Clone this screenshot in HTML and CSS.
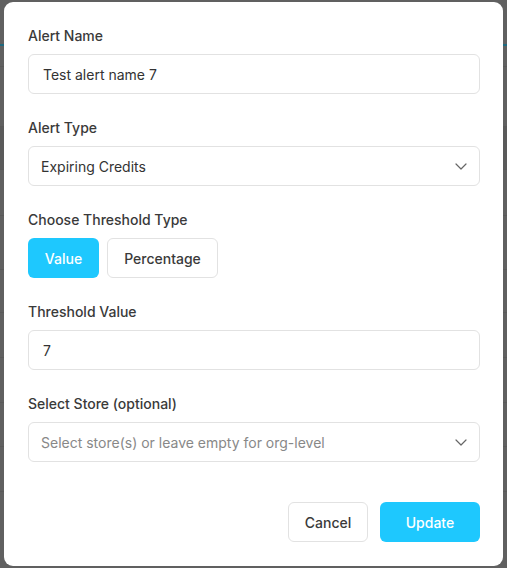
FILE: index.html
```html
<!DOCTYPE html>
<html lang="en">
<head>
<meta charset="utf-8">
<title>Edit Alert</title>
<link rel="stylesheet" href="styles.css">
</head>
<body>
<div class="backdrop">
  <div class="bg-rows">
    <div class="bg-row accent" style="height:46px"></div>
    <div class="bg-row" style="height:21px"></div>
    <div class="bg-row" style="height:60px"></div>
    <div class="bg-row shade" style="height:43px"></div>
    <div class="bg-row" style="height:46px"></div>
    <div class="bg-row" style="height:54px"></div>
    <div class="bg-row" style="height:43px"></div>
    <div class="bg-row" style="height:45px"></div>
    <div class="bg-row" style="height:45px"></div>
    <div class="bg-row" style="height:44px"></div>
    <div class="bg-row" style="height:45px"></div>
  </div>
</div>
<div class="overlay">
  <form class="modal">
    <div class="field">
      <label class="label">Alert Name</label>
      <div class="input">Test alert name 7</div>
    </div>
    <div class="field">
      <label class="label">Alert Type</label>
      <div class="input select">
        <span>Expiring Credits</span>
        <svg class="chev" width="12" height="7" viewBox="0 0 12 7"><path d="M1 1 L6 6 L11 1" fill="none" stroke="#666" stroke-width="1.2" stroke-linecap="round" stroke-linejoin="round"/></svg>
      </div>
    </div>
    <div class="field">
      <label class="label">Choose Threshold Type</label>
      <div class="toggle">
        <button type="button" class="btn primary small">Value</button>
        <button type="button" class="btn outline small">Percentage</button>
      </div>
    </div>
    <div class="field">
      <label class="label">Threshold Value</label>
      <div class="input">7</div>
    </div>
    <div class="field">
      <label class="label">Select Store (optional)</label>
      <div class="input select placeholder">
        <span>Select store(s) or leave empty for org-level</span>
        <svg class="chev" width="12" height="7" viewBox="0 0 12 7"><path d="M1 1 L6 6 L11 1" fill="none" stroke="#666" stroke-width="1.2" stroke-linecap="round" stroke-linejoin="round"/></svg>
      </div>
    </div>
    <div class="actions">
      <button type="button" class="btn outline cancel">Cancel</button>
      <button type="button" class="btn primary update">Update</button>
    </div>
  </form>
</div>
</body>
</html>
```

FILE: styles.css
```css
* { box-sizing: border-box; }
html, body { margin: 0; padding: 0; }
body {
  width: 507px;
  height: 568px;
  overflow: hidden;
  font-family: Inter, "Liberation Sans", sans-serif;
  background: #606060;
  position: relative;
}
.backdrop { position: absolute; inset: 0; }
.bg-rows { display: flex; flex-direction: column; }
.bg-row { border-bottom: 1px solid #595959; }
.bg-row.accent { border-bottom: 2px solid #1f6a80; }
.bg-row.shade { background: #5a5a5a; }
.overlay {
  position: absolute;
  inset: 0;
  padding: 2px 4px 2px 4px;
}
.modal {
  margin: 0;
  width: 499px;
  height: 564px;
  background: #fff;
  border-radius: 9px;
  padding: 24px 23px 24px 24px;
  display: flex;
  flex-direction: column;
  gap: 24px;
}
.field { display: flex; flex-direction: column; gap: 8px; }
.label {
  font-size: 14px;
  line-height: 20px;
  font-weight: 500;
  color: #3a3a3a;
}
.input {
  height: 40px;
  border: 1px solid #e2e2e2;
  border-radius: 6px;
  padding: 0 14px;
  display: flex;
  align-items: center;
  font-size: 14px;
  color: #333;
}
.input.select { justify-content: space-between; padding: 0 12px 0 12px; }
.input.placeholder { color: #888; }
.chev { display: block; }
.toggle { display: flex; gap: 8px; }
.btn {
  font-family: inherit;
  font-size: 14px;
  font-weight: 500;
  height: 40px;
  border-radius: 6px;
  cursor: pointer;
  padding: 0;
}
.btn.primary { background: #1ec8fe; color: #fff; border: none; }
.btn.outline { background: #fff; color: #3a3a3a; border: 1px solid #e2e2e2; }
.btn.small:first-child { width: 71px; }
.btn.small.outline { width: 111px; }
.actions {
  margin-top: 16px;
  display: flex;
  justify-content: flex-end;
  gap: 12px;
}
.cancel { width: 80px; }
.update { width: 100px; }
```
